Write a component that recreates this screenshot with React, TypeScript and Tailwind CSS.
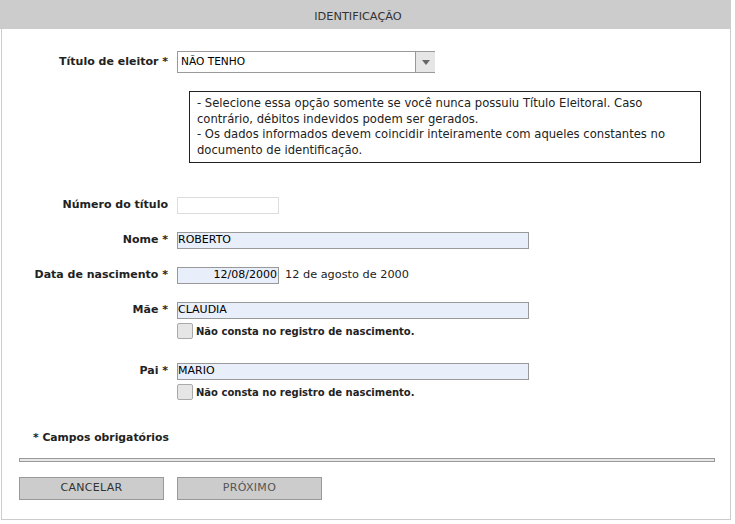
import React from "react";

const font = { fontFamily: '"DejaVu Sans", Verdana, sans-serif' };

function Label({ children }: { children: React.ReactNode }) {
  return (
    <div className="w-[175px] shrink-0 pr-[9px] text-right font-bold text-[11px] text-[#222]">
      {children}
    </div>
  );
}

function Check() {
  return (
    <div className="flex items-center gap-[3px] mt-[4px]">
      <div className="w-[16px] h-[16px] rounded-[2px] border border-[#aaa] bg-[#e6e6e6]" />
      <span className="font-bold text-[10px] text-[#222]">Não consta no registro de nascimento.</span>
    </div>
  );
}

export default function App() {
  return (
    <div className="w-[735px] h-[524px] bg-white text-[#222]" style={font}>
      <div className="w-[731px] h-[29px] bg-[#cccccc] flex items-center justify-center pt-[5px] pr-[15px] text-[11.3px] text-[#333]">
        IDENTIFICAÇÃO
      </div>
      <div className="ml-[1px] w-[730px] h-[491px] border-l border-r border-b border-[#cccccc] flex flex-col">
        <div className="flex items-center mt-[22px]">
          <Label>Título de eleitor *</Label>
          <div className="w-[258px] h-[22px] flex border-t border-b border-l border-[#999] bg-white">
            <div className="flex-1 flex items-center pl-[3px] text-[10.6px] text-black">NÃO TENHO</div>
            <div className="w-[20px] h-full bg-[#e6e6e6] border-l border-[#999] flex items-center justify-center">
              <svg width="8" height="5" viewBox="0 0 8 5"><path d="M0 0 L8 0 L4 5 Z" fill="#666" /></svg>
            </div>
          </div>
        </div>
        <div className="ml-[187px] mt-[18px] w-[512px] h-[72px] border border-[#222] px-[7px] pt-[4px] text-[11.6px] leading-[15.5px] text-[#222]">
          - Selecione essa opção somente se você nunca possuiu Título Eleitoral. Caso contrário, débitos indevidos podem ser gerados.
          <br />- Os dados informados devem coincidir inteiramente com aqueles constantes no documento de identificação.
        </div>
        <div className="flex items-center mt-[34px]">
          <Label>Número do título</Label>
          <div className="w-[102px] h-[17px] border border-[#ddd] bg-white" />
        </div>
        <div className="flex items-center mt-[18px]">
          <Label>Nome *</Label>
          <div className="w-[352px] h-[17px] border border-[#999] bg-[#e8eefa] flex items-center text-[11px] text-black">ROBERTO</div>
        </div>
        <div className="flex items-center mt-[18px]">
          <Label>Data de nascimento *</Label>
          <div className="w-[102px] h-[17px] border border-[#999] bg-[#e8eefa] flex items-center justify-end pr-[1px] text-[11px] text-black">12/08/2000</div>
          <span className="ml-[6px] text-[11.3px] text-[#222]">12 de agosto de 2000</span>
        </div>
        <div className="flex mt-[18px]">
          <Label><div className="h-[17px] flex items-center justify-end">Mãe *</div></Label>
          <div className="flex flex-col">
            <div className="w-[352px] h-[17px] border border-[#999] bg-[#e8eefa] flex items-center text-[11px] text-black">CLAUDIA</div>
            <Check />
          </div>
        </div>
        <div className="flex mt-[24px]">
          <Label><div className="h-[17px] flex items-center justify-end">Pai *</div></Label>
          <div className="flex flex-col">
            <div className="w-[352px] h-[17px] border border-[#999] bg-[#e8eefa] flex items-center text-[11px] text-black">MARIO</div>
            <Check />
          </div>
        </div>
        <div className="ml-[31px] mt-[30px] font-bold text-[10.8px] text-[#222]">* Campos obrigatórios</div>
        <div className="ml-[17px] mt-[12px] w-[696px] h-[4px] border border-[#999] bg-[#e8e8e8]" />
        <div className="flex ml-[17px] mt-[15px] gap-[13px]">
          <div className="w-[145px] h-[23px] bg-[#cccccc] border border-[#999] flex items-center justify-center text-[11px] tracking-[0.3px] text-[#333]">CANCELAR</div>
          <div className="w-[145px] h-[23px] bg-[#cccccc] border border-[#999] flex items-center justify-center text-[11px] tracking-[0.3px] text-[#555]">PRÓXIMO</div>
        </div>
      </div>
    </div>
  );
}
